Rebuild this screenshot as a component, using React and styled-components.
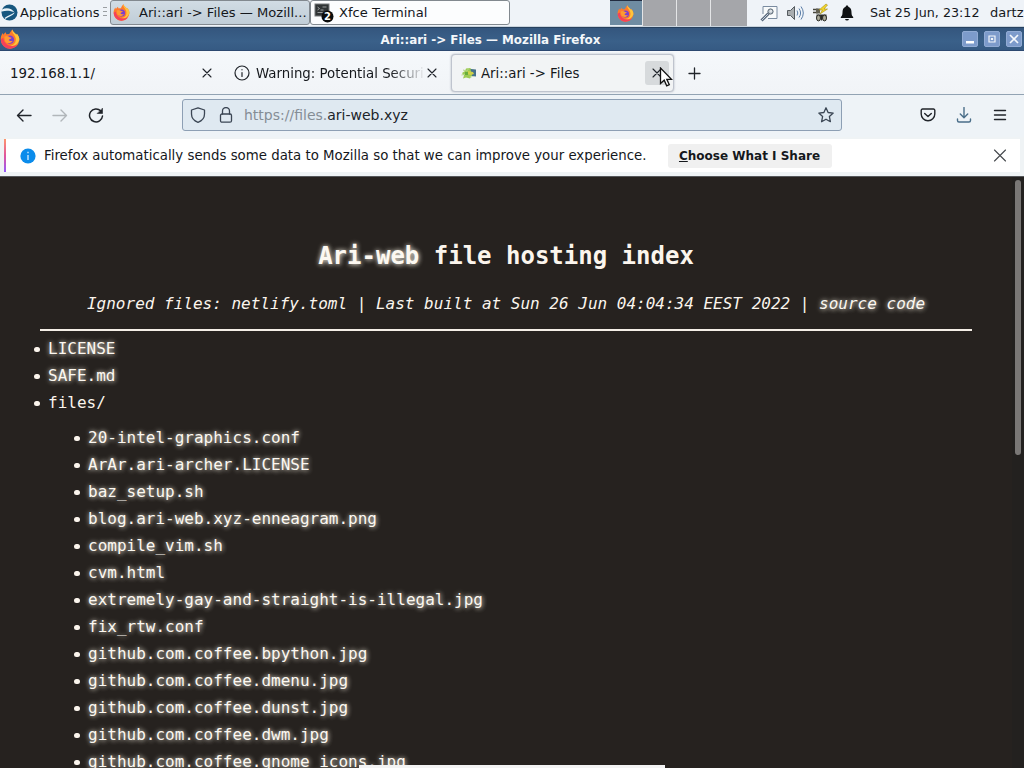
import styled, { createGlobalStyle } from "styled-components";

const GlobalStyle = createGlobalStyle`
  * {
    box-sizing: border-box;
  }
  body {
    margin: 0;
    overflow: hidden;
    font-family: "DejaVu Sans", sans-serif;
    color: #15181c;
  }
  svg {
    display: block;
    flex: none;
  }
`;

const Screen = styled.div`
  width: 1024px;
  height: 768px;
  display: flex;
  flex-direction: column;
  position: relative;
  overflow: hidden;
  background: #26221f;
`;

/* desktop panel */
const Panel = styled.div`
  height: 27px;
  flex: none;
  display: flex;
  align-items: flex-start;
  background: #eff3f8;
  border-bottom: 1px solid #c9d3dd;
  font-size: 13px;
  line-height: 25px;
  white-space: nowrap;
`;

const AppMenu = styled.div`
  width: 110px;
  height: 25px;
  flex: none;
  padding-left: 1px;
  display: flex;
  align-items: center;
  gap: 2px;
`;

const Grip = styled.div`
  width: 4px;
  height: 11px;
  margin-left: 2px;
  background: repeating-linear-gradient(#9a9ea2 0 1px, transparent 1px 4px);
`;

const TaskButton = styled.div`
  width: 200px;
  height: 25px;
  flex: none;
  padding: 0 0 0 ${(props) => (props.$active ? 2 : 3)}px;
  display: flex;
  align-items: center;
  gap: ${(props) => (props.$active ? 9 : 5)}px;
  border: 1px solid #82898f;
  border-radius: 3px;
  font-size: 13.1px;
  background: ${(props) =>
    props.$active ? "linear-gradient(#d1dce4, #c0cdd7)" : "#fcfdfe"};
`;

const Pager = styled.div`
  display: flex;
  flex: none;
  gap: 1px;
  height: 26px;
  margin-left: 100px;
  background: #e4e5e7;
`;

const Workspace = styled.div`
  width: ${(props) => props.$width}px;
  height: 26px;
  padding-right: 2px;
  display: flex;
  justify-content: center;
  align-items: center;
  background: ${(props) => (props.$active ? "#6f8ca2" : "#a5a6aa")};
  border-top: ${(props) => (props.$active ? "1px solid #222c40" : "none")};
  border-bottom: ${(props) => (props.$active ? "1px solid #e8eef3" : "none")};
`;

const Tray = styled.div`
  display: flex;
  align-items: center;
  height: 25px;
  gap: 6px;
  margin-left: 12px;
`;

const Clock = styled.div`
  width: 109px;
  margin-left: 13px;
  font-size: 12.7px;
`;

const User = styled.div`
  margin-left: 11px;
`;

/* window */
const TitleBar = styled.div`
  height: 24px;
  flex: none;
  display: grid;
  grid-template-columns: 60px 1fr 60px;
  align-items: center;
  background: linear-gradient(#34567e, #3a6089 60%, #365a83);
  border-top: 1px solid #27415f;
  border-bottom: 1px solid #2c4870;
`;

const WindowTitle = styled.div`
  text-align: center;
  padding: 2px 43px 0 0;
  font-size: 11.9px;
  font-weight: bold;
  color: #f4f7fa;
`;

const WindowButtons = styled.div`
  display: flex;
  gap: 6px;
  justify-content: flex-end;
  padding-right: 2px;
`;

const WindowButton = styled.div`
  width: 16px;
  height: 16px;
  border-radius: 2px;
  background: #7d9bcb;
  border: 1px solid #91abd4;
  display: grid;
  place-items: center;
`;

const TabBar = styled.div`
  height: 44px;
  flex: none;
  display: flex;
  align-items: center;
  padding-top: 1px;
  background: linear-gradient(#f5f8fb, #f1f4f7);
  border-bottom: 1px solid #92a3b3;
  font-size: 13.33px;
`;

const Tab = styled.div`
  width: ${(props) => props.$width}px;
  height: 38px;
  padding: 0 ${(props) => props.$right}px 0 ${(props) => props.$left}px;
  display: flex;
  align-items: center;
  border: 1px solid ${(props) => (props.$active ? "#bfc4ce" : "transparent")};
  border-radius: 4px;
  background: ${(props) => (props.$active ? "#f2f4f5" : "transparent")};
  box-shadow: ${(props) =>
    props.$active ? "0 0 2px rgba(100, 105, 125, 0.5)" : "none"};
`;

const TabLabel = styled.div`
  flex: 1;
  min-width: 0;
  overflow: hidden;
  white-space: nowrap;
  margin-left: ${(props) => props.$gap || 0}px;
  ${(props) =>
    props.$fade &&
    "margin-right: -4px; mask-image: linear-gradient(to right, #000 80%, transparent 101%);"}
`;

const TabClose = styled.div`
  width: 24px;
  height: 24px;
  border-radius: 3px;
  display: grid;
  place-items: center;
  background: ${(props) => (props.$hover ? "#d7dadc" : "transparent")};
`;

const NewTab = styled.div`
  margin-left: 13px;
`;

const NavBar = styled.div`
  height: 42px;
  flex: none;
  display: flex;
  align-items: center;
  padding: 0 16px 2px;
  background: #eef3f7;
`;

const NavButtons = styled.div`
  display: flex;
  gap: 20px;
  width: 166px;
`;

const AddressBar = styled.div`
  width: 660px;
  height: 32px;
  display: flex;
  align-items: center;
  padding: 0 7px;
  border: 1px solid #8d9fb4;
  border-radius: 3px;
  background: #dfe9f1;
  font-size: 14px;
  color: #20242a;
`;

const LockButton = styled.div`
  margin-left: 12px;
`;

const Address = styled.div`
  flex: 1;
  margin-left: 10px;

  span {
    color: #858d95;
  }
`;

const ToolButtons = styled.div`
  margin-left: auto;
  display: flex;
  gap: 20px;
`;

const Notice = styled.div`
  height: 40px;
  flex: none;
  padding: 2px 4px 5px;
  background: #eff3f5;
  border-bottom: 1px solid #55575a;
`;

const NoticeBody = styled.div`
  height: 33px;
  display: flex;
  align-items: center;
  padding: 0 12px 0 14px;
  background: #fff;
  border-left: 2px solid;
  border-image: linear-gradient(#ff9a6a, #e0559c, #9059ff) 1;
  font-size: 13.33px;
`;

const NoticeText = styled.div`
  margin-left: 8px;
  white-space: nowrap;
`;

const ShareButton = styled.div`
  width: 164px;
  height: 24px;
  margin-left: 21px;
  margin-right: auto;
  line-height: 24px;
  text-align: center;
  border-radius: 3px;
  background: #f0f0f0;
  font-size: 12px;
  font-weight: bold;
`;

/* web page */
const Page = styled.div`
  flex: 1;
  min-height: 0;
  display: flex;
  justify-content: space-between;
  overflow: hidden;
  background: #26221f;
  font-family: "DejaVu Sans Mono", monospace;
  font-size: 16px;
  color: #fbf5ed;
`;

const Article = styled.div`
  width: 972px;
  padding: 62px 0 0 40px;
`;

const Heading = styled.h1`
  margin: 0;
  font-size: 24px;
  line-height: 35px;
  text-align: center;
`;

const Info = styled.p`
  margin: 16px 0 0;
  line-height: 27px;
  text-align: center;
  font-style: italic;
  white-space: nowrap;
`;

const Link = styled.a`
  color: #fcf8f1;
  text-shadow: 0 0 5px rgba(251, 245, 230, 0.8), 1px 1px 5px rgba(251, 245, 230, 0.4);
`;

const Rule = styled.hr`
  margin: 12px 0 4px;
  border: none;
  height: 2px;
  background: #f4eee6;
`;

const List = styled.ul`
  list-style: none;
  margin: ${(props) => (props.$nested ? "8px 0 0 40px" : "0 0 0 -6px")};
  padding: 0;
`;

const Item = styled.li`
  line-height: 27px;
  white-space: nowrap;
`;

const Bullet = styled.span`
  display: inline-block;
  width: 5.5px;
  height: 5.5px;
  margin-right: 8.5px;
  border-radius: 50%;
  background: #fbf5ed;
  vertical-align: 2px;
`;

const ScrollTrack = styled.div`
  width: 12px;
  padding: 3px 2px 0 3px;
  background: #23211f;
`;

const ScrollThumb = styled.div`
  width: 6px;
  height: 275px;
  border-radius: 3px;
  background: #7a7876;
`;

const StatusPeek = styled.div`
  position: absolute;
  left: 359px;
  bottom: 0;
  width: 306px;
  height: 3px;
  background: #f3f3f3;
`;

const Pointer = styled.svg`
  position: absolute;
  left: 659px;
  top: 67px;
`;

const files = [
  "20-intel-graphics.conf",
  "ArAr.ari-archer.LICENSE",
  "baz_setup.sh",
  "blog.ari-web.xyz-enneagram.png",
  "compile_vim.sh",
  "cvm.html",
  "extremely-gay-and-straight-is-illegal.jpg",
  "fix_rtw.conf",
  "github.com.coffee.bpython.jpg",
  "github.com.coffee.dmenu.jpg",
  "github.com.coffee.dunst.jpg",
  "github.com.coffee.dwm.jpg",
  "github.com.coffee.gnome_icons.jpg",
];

const Icon = ({ size = 16, color = "#20242a", width = 1.3, children }) => (
  <svg
    width={size}
    height={size}
    viewBox="0 0 16 16"
    fill="none"
    stroke={color}
    strokeWidth={width}
    strokeLinecap="round"
    strokeLinejoin="round"
  >
    {children}
  </svg>
);

const FirefoxIcon = ({ size = 16 }) => (
  <svg width={size} height={size} viewBox="0 0 16 16">
    <path
      d="M8 15.7A7.4 7.4 0 0 1 .6 8.3C.5 6 1.3 4.3 2.3 3.2L2.7 4.6C3.3 3.6 3.9 3 4.7 2.5L5 4.1 7.4 4C8.2 2.6 8.7 1.3 10 .3 10.2 2.5 12.3 3.1 13.3 4.6L13.5 3.7C15 5.5 15.6 7 15.4 9A7.4 7.4 0 0 1 8 15.7Z"
      fill="#ff7a2c"
    />
    <path
      d="M10 .3C8.8 3 12 4 12.6 7.5 13 10.8 11 13 8.3 13 10 14.5 14 13 15.4 9 15.6 7 15 5.5 13.5 3.7L13.3 4.6C12.3 3.1 10.2 2.5 10 .3Z"
      fill="#ffc53a"
    />
    <path
      d="M.6 8.3C1 13 4.5 15.7 8 15.7 10.5 15.7 12.8 14.5 14 12.8 9 15 3.5 13 2.6 7Z"
      fill="#f5415a"
    />
    <circle cx="8" cy="8.5" r="3.3" fill="#7b3fd0" />
    <path
      d="M3.5 6.2C5 5.2 6.5 5.6 7.7 6.5L9.3 6.9C8.8 8 7.5 7.8 7 8.7 7.5 9.7 9 9.8 10.2 9.3 9.2 11.6 5.3 12.2 4 9.5Z"
      fill="#ff9a32"
    />
  </svg>
);

const CloseIcon = () => (
  <Icon width={1.1}>
    <path d="M4 4l8 8M12 4l-8 8" />
  </Icon>
);

const App = () => {
  return (
    <Screen>
      <GlobalStyle />
      <Panel>
        <AppMenu>
          <svg width="17" height="17" viewBox="0 0 17 17">
            <circle cx="8.5" cy="8.5" r="8" fill="#17577f" />
            <path d="M1 5.500C5 3 11 4 13.5 8.5 10 6.5 5 6 1 7.500Z" fill="#e9f2f7" />
            <path d="M13.5 8.5C13 11 8 12.5 4.5 15L3.5 14C7 11.5 11 10.5 13.5 8.5Z" fill="#e9f2f7" />
          </svg>
          Applications
          <Grip />
        </AppMenu>
        <TaskButton $active>
          <FirefoxIcon size={17} />
          Ari::ari -&gt; Files — Mozill...
        </TaskButton>
        <TaskButton>
          <svg width="20" height="21" viewBox="0 0 20 21">
            <rect x="1" y="2" width="14" height="12" fill="#303435" stroke="#74787a" />
            <path d="M3.5 5l2 1.5-2 1.5M6.5 8h3M3.5 10.5h7M8.5 5h4" stroke="#b4b8b9" fill="none" strokeWidth=".8" />
            <circle cx="13.5" cy="14.5" r="6" fill="#0b0c0c" />
            <text x="13.5" y="18" textAnchor="middle" fontSize="10" fontWeight="bold" fill="#fff">
              2
            </text>
          </svg>
          Xfce Terminal
        </TaskButton>
        <Pager>
          <Workspace $width={32} $active>
            <FirefoxIcon size={17} />
          </Workspace>
          <Workspace $width={33} />
          <Workspace $width={33} />
          <Workspace $width={36} />
        </Pager>
        <Tray>
          <svg width="20" height="20" viewBox="0 0 20 20" fill="none">
            <path d="M4 11V3.5h14v12H9" fill="#f8fafb" stroke="#7a8ba0" />
            <path d="M2.5 17.5l7-7" stroke="#59687b" strokeWidth="3" />
            <path d="M2.5 17.5l7-7" stroke="#c4d0dc" strokeWidth="1" />
            <circle cx="11.5" cy="8.5" r="2.6" fill="#c4ccd4" stroke="#55626f" />
            <path d="M11.5 8.5l1-1" stroke="#fff" strokeWidth="1.3" />
          </svg>
          <svg width="20" height="18" viewBox="0 0 20 18" fill="none">
            <path d="M2.5 6.5h3l4-4v13l-4-4h-3z" fill="#a9adb0" stroke="#555b60" />
            <path d="M12 6.5q1.6 2.5 0 5M14 4.5q3.2 4.5 0 9M16 2.5q4.6 6.5 0 13" stroke="#5b7ea8" />
          </svg>
          <svg width="20" height="20" viewBox="0 0 20 20" fill="none">
            <path d="M2 6.5h5M2 9.5h5" stroke="#47463d" strokeWidth="1.3" />
            <path d="M5 5.5h4v5H5z" fill="#626052" />
            <path d="M15 1L8 7h3.5L9 11l7.5-5H13l3.5-4z" fill="#f3d42b" stroke="#a28e18" strokeWidth=".6" />
            <path d="M5.5 11.5h10v3h-10z" fill="#34352f" />
            <ellipse cx="7.5" cy="15" rx="2" ry="2.9" fill="#aaa999" stroke="#292a26" />
            <ellipse cx="13.5" cy="15" rx="2" ry="2.9" fill="#aaa999" stroke="#292a26" />
            <path d="M10.5 12v5.5" stroke="#292a26" strokeWidth="1.3" />
          </svg>
          <svg width="20" height="18" viewBox="0 0 20 18">
            <path d="M10 1.5c.9 0 1.3.5 1.3 1.2C14 3.5 14.5 6 14.5 8.5c0 2.7.8 3.7 1.7 4.5v1H3.8v-1c.9-.8 1.7-1.8 1.7-4.5 0-2.5.5-5 3.2-5.8 0-.7.4-1.2 1.3-1.2zM8 15h4q-.4 1.5-2 1.5T8 15z" fill="#101214" />
          </svg>
        </Tray>
        <Clock>Sat 25 Jun, 23:12</Clock>
        <User>dartz</User>
      </Panel>

      <TitleBar>
        <FirefoxIcon size={20} />
        <WindowTitle>Ari::ari -&gt; Files — Mozilla Firefox</WindowTitle>
        <WindowButtons>
          <WindowButton>
            <svg width="14" height="14" viewBox="0 0 14 14">
              <path d="M3 9h8v2.5H3z" fill="#fff" />
            </svg>
          </WindowButton>
          <WindowButton>
            <svg width="14" height="14" viewBox="0 0 14 14">
              <path d="M4 4h6v6H4zM6.5 6.5h1v1h-1z" fill="none" stroke="#f2f6fb" strokeWidth="1.2" />
            </svg>
          </WindowButton>
          <WindowButton>
            <svg width="14" height="14" viewBox="0 0 14 14">
              <path d="M3 3l8 8M11 3l-8 8" stroke="#f5f8fc" strokeWidth="1.7" />
            </svg>
          </WindowButton>
        </WindowButtons>
      </TitleBar>

      <TabBar>
        <Tab $width={226} $left={9} $right={6}>
          <TabLabel>192.168.1.1/</TabLabel>
          <TabClose>
            <CloseIcon />
          </TabClose>
        </Tab>
        <Tab $width={225} $left={7} $right={6}>
          <Icon width={1.2}>
            <circle cx="8" cy="8" r="7" />
            <path d="M8 7.5v4M8 4.7v.1" />
          </Icon>
          <TabLabel $gap={6} $fade>
            Warning: Potential Securi
          </TabLabel>
          <TabClose>
            <CloseIcon />
          </TabClose>
        </Tab>
        <Tab $width={223} $left={9} $right={4} $active>
          <svg width="16" height="16" viewBox="0 0 16 16">
            <path d="M1 8L4 6l1-2.5 4-.5 2 1.500 3 .5v6l-4 .5-1 2-4-1-3 1 1-3z" fill="#9ccb52" />
            <path d="M2 5l4 1 2-3M.5 10l5-1M9 11l1 2" stroke="#b5d584" fill="none" />
            <path d="M9.5 4l5.5.5v7L11 11z" fill="#45708c" />
            <path d="M7 6l5 1 1 2-3 1-4-1z" fill="#cfd048" />
            <path d="M4 7h3v3H4z" fill="#68ae3c" />
          </svg>
          <TabLabel $gap={4}>Ari::ari -&gt; Files</TabLabel>
          <TabClose $hover>
            <CloseIcon />
          </TabClose>
        </Tab>
        <NewTab>
          <Icon>
            <path d="M2 8.500h11M7.500 3v11" />
          </Icon>
        </NewTab>
      </TabBar>

      <NavBar>
        <NavButtons>
          <Icon width={1.4}>
            <path d="M15 8.5H1.5M7 3L1.500 8.5 7 14" />
          </Icon>
          <Icon color="#b1b6ba" width={1.4}>
            <path d="M1 8.5h13.5M9 3L14.5 8.5 9 14" />
          </Icon>
          <Icon width={1.5}>
            <path d="M12.8 4A6.5 6.5 0 1 0 14.5 9" />
            <path d="M14.5 1.5v5h-5z" fill="#20242a" strokeWidth=".6" />
          </Icon>
        </NavButtons>
        <AddressBar>
          <Icon color="#3b4654">
            <path d="M8 .8L14.5 3v4c0 4-2.5 6.8-6.5 8.300C4 13.8 1.5 11 1.5 7V3z" />
          </Icon>
          <LockButton>
            <Icon color="#3b4654">
              <rect x="2.5" y="7" width="11" height="8.2" rx="1.5" />
              <path d="M4.500 7V4a3.5 3.5 0 0 1 7 0v3" />
            </Icon>
          </LockButton>
          <Address>
            <span>https://files.</span>ari-web.xyz
          </Address>
          <Icon color="#3b4654">
            <path d="M8 .8l2.1 4.7 5.1.6-3.800 3.5 1 5.1L8 12.2l-4.4 2.5 1-5.1L.8 6.1l5.1-.6z" />
          </Icon>
        </AddressBar>
        <ToolButtons>
          <Icon width={1.4}>
            <path d="M2.5 2h11a1.3 1.3 0 0 1 1.3 1.3V7a6.8 6.8 0 0 1-13.6 0V3.3A1.3 1.3 0 0 1 2.5 2z" />
            <path d="M4.7 6.5L8 9.6l3.3-3.1" />
          </Icon>
          <Icon color="#4a6e89" width={1.4}>
            <path d="M8 .5v10M4.3 7L8 10.7 11.7 7M1.500 12v1.5q0 1.5 1.500 1.5h10q1.500 0 1.500-1.5V12" />
          </Icon>
          <Icon width={1.4}>
            <path d="M2.5 3.500h11M2.5 8h11M2.5 12.500h11" />
          </Icon>
        </ToolButtons>
      </NavBar>

      <Notice>
        <NoticeBody>
          <svg width="16" height="16" viewBox="0 0 16 16">
            <circle cx="8" cy="8" r="7.6" fill="#0b8ceb" />
            <path d="M8 7v5M8 3.8v1.4" stroke="#d8eeff" strokeWidth="1.3" />
          </svg>
          <NoticeText>
            Firefox automatically sends some data to Mozilla so that we can
            improve your experience.
          </NoticeText>
          <ShareButton>
            <u>C</u>hoose What I Share
          </ShareButton>
          <Icon color="#44484c" width={1.1}>
            <path d="M2.500 2l11 11M13.500 2l-11 11" />
          </Icon>
        </NoticeBody>
      </Notice>

      <Page>
        <Article>
          <Heading>
            <Link>Ari-web</Link> file hosting index
          </Heading>
          <Info>
            Ignored files: netlify.toml | Last built at Sun 26 Jun 04:04:34 EEST
            2022 | <Link>source code</Link>
          </Info>
          <Rule />
          <List>
            <Item>
              <Bullet />
              <Link>LICENSE</Link>
            </Item>
            <Item>
              <Bullet />
              <Link>SAFE.md</Link>
            </Item>
            <Item>
              <Bullet />
              files/
              <List $nested>
                {files.map((file) => (
                  <Item key={file}>
                    <Bullet />
                    <Link>{file}</Link>
                  </Item>
                ))}
              </List>
            </Item>
          </List>
        </Article>
        <ScrollTrack>
          <ScrollThumb />
        </ScrollTrack>
      </Page>
      <StatusPeek />
      <Pointer width="14" height="22" viewBox="0 0 14 22">
        <path d="M1.5 1v15.5l3.7-3.3 2.5 5.600 2.600-1.200-2.500-5.300h4.700z" fill="#fff" stroke="#111" strokeWidth="1.3" />
      </Pointer>
    </Screen>
  );
};

export default App;
